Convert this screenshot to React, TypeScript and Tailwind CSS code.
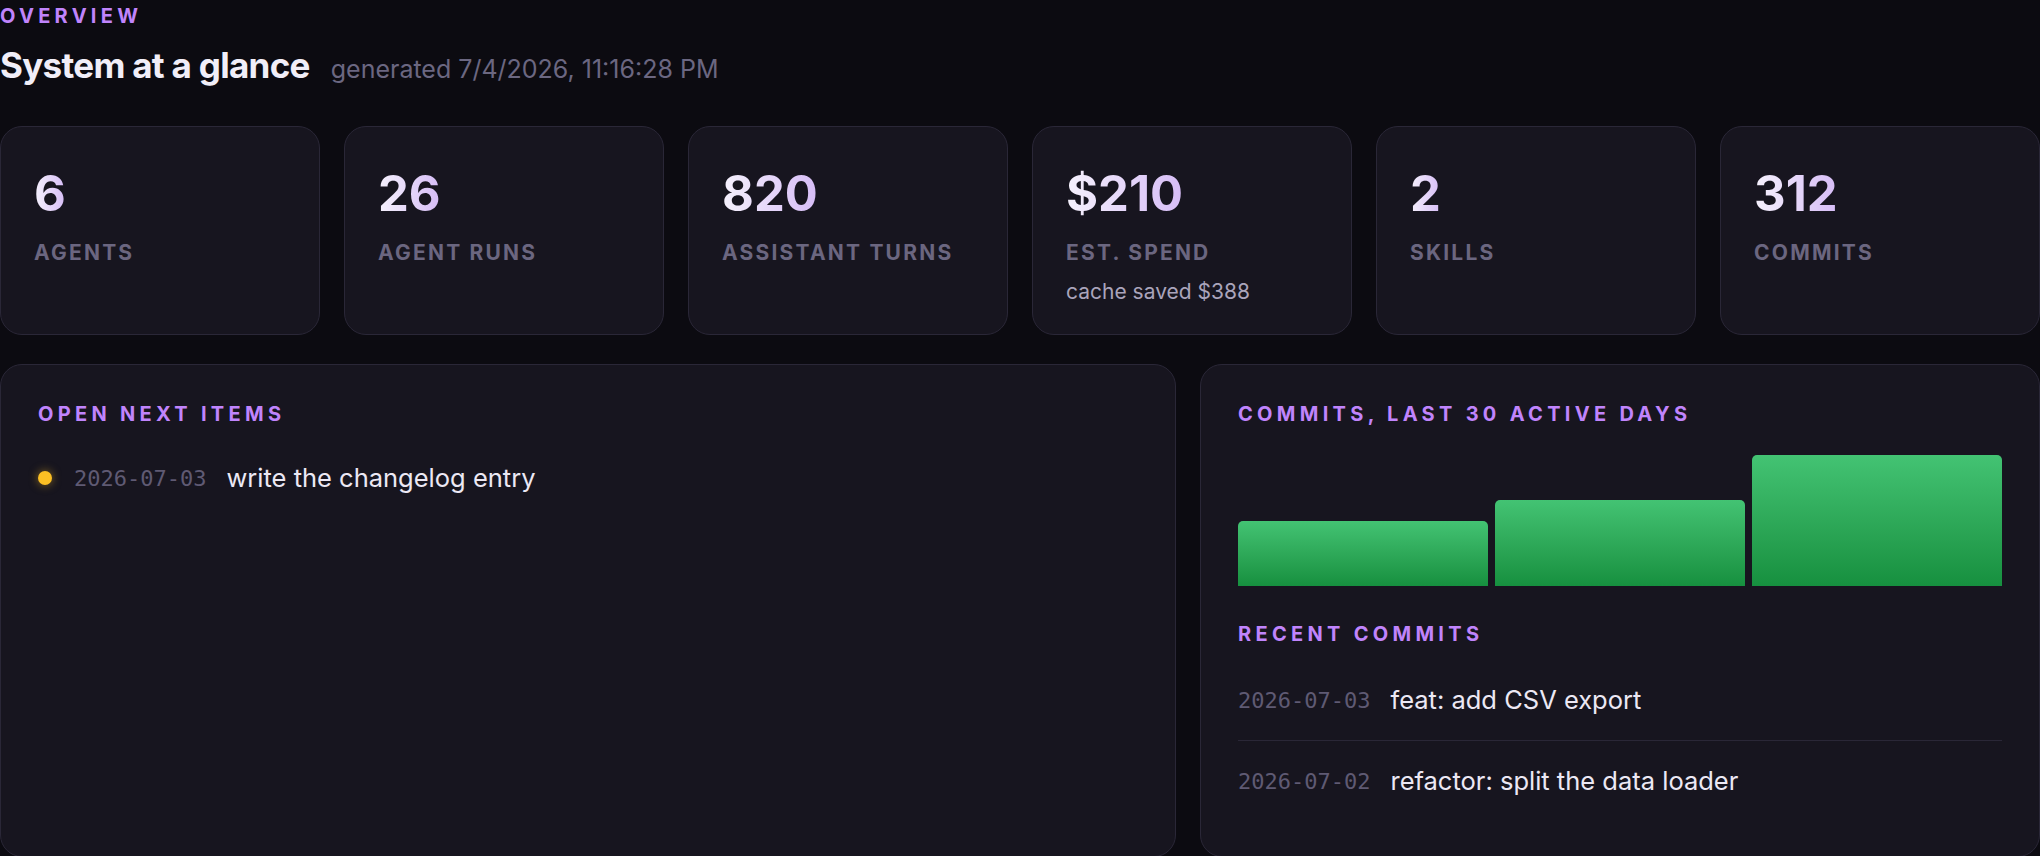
import React from "react";

const stats = [
  { value: "6", label: "Agents" },
  { value: "26", label: "Agent runs" },
  { value: "820", label: "Assistant turns" },
  { value: "$210", label: "Est. spend", sub: "cache saved $388" },
  { value: "2", label: "Skills" },
  { value: "312", label: "Commits" },
];

const nextItems = [{ date: "2026-07-03", text: "write the changelog entry" }];

const bars = [50, 66, 100];

const commits = [
  { date: "2026-07-03", msg: "feat: add CSV export" },
  { date: "2026-07-02", msg: "refactor: split the data loader" },
];

const sans = "font-['Inter','Liberation_Sans',sans-serif]";
const mono = "font-['DejaVu_Sans_Mono','Liberation_Mono',monospace]";

function Eyebrow({ children }: { children: React.ReactNode }) {
  return (
    <div className="text-[20px] leading-[28px] font-bold uppercase tracking-[0.215em] text-[#c084fc]">
      {children}
    </div>
  );
}

export default function App() {
  return (
    <div className={`${sans} min-h-screen h-[856px] overflow-hidden bg-[#0c0b11] text-[#ece8f4] pt-[2px]`}>
      <Eyebrow>Overview</Eyebrow>
      <div className="mt-[15px] flex h-[40px] items-baseline gap-[21px]">
        <h1 className="text-[35px] leading-[40px] font-bold tracking-[-0.02em] text-[#f1eef8]">
          System at a glance
        </h1>
        <span className="text-[25px] leading-[40px] text-[#6b6781]">generated 7/4/2026, 11:16:28 PM</span>
      </div>

      {/* stat cards */}
      <div className="mt-[41px] grid grid-cols-6 gap-6">
        {stats.map((s) => (
          <div
            key={s.label}
            className="h-[209px] rounded-[22px] border border-[#2a2737] bg-[#17151f] px-[33px] pt-[42px]"
          >
            <div className="text-[49px] leading-none font-bold">
              <span className="inline-block bg-gradient-to-r from-[#f5f1fc] to-[#d6bcf6] bg-clip-text text-transparent">
                {s.value}
              </span>
            </div>
            <div className="mt-[21px] text-[21px] leading-[28px] font-bold uppercase tracking-[0.105em] text-[#6b6680]">
              {s.label}
            </div>
            {s.sub && <div className="mt-[11px] text-[21px] leading-[28px] text-[#aaa4bb]">{s.sub}</div>}
          </div>
        ))}
      </div>

      {/* panels */}
      <div className="mt-[29px] grid grid-cols-[7fr_5fr] gap-6">
        <div className="h-[493px] rounded-[22px] border border-[#2a2737] bg-[#17151f] px-[37px] pt-[35px]">
          <Eyebrow>Open next items</Eyebrow>
          <ul className="mt-[34px]">
            {nextItems.map((it) => (
              <li key={it.date} className="flex h-[32px] items-center">
                <span className="h-[14px] w-[14px] rounded-full bg-[#fbbf24] shadow-[0_0_10px_rgba(251,191,36,0.5)]" />
                <span className={`${mono} ml-[22px] text-[22px] text-[#5f5a73]`}>{it.date}</span>
                <span className="ml-[20px] text-[25.5px] text-[#ece8f4]">{it.text}</span>
              </li>
            ))}
          </ul>
        </div>

        <div className="h-[493px] rounded-[22px] border border-[#2a2737] bg-[#17151f] px-[37px] pt-[35px]">
          <Eyebrow>Commits, last 30 active days</Eyebrow>
          <div className="mt-[27px] flex h-[131px] items-end gap-[7px]">
            {bars.map((h, i) => (
              <div
                key={i}
                className="flex-1 rounded-t-[5px] bg-gradient-to-b from-[#43c373] to-[#16903f]"
                style={{ height: `${h}%` }}
              />
            ))}
          </div>
          <div className="mt-[34px]">
            <Eyebrow>Recent commits</Eyebrow>
          </div>
          <ul className="mt-[13px]">
            {commits.map((c, i) => (
              <li
                key={c.date}
                className={`flex h-[80px] items-center ${i === 0 ? "border-b border-[#2a2737]" : ""}`}
              >
                <span className={`${mono} text-[22px] text-[#5f5a73]`}>{c.date}</span>
                <span className="ml-[20px] text-[25.5px] text-[#ece8f4]">{c.msg}</span>
              </li>
            ))}
          </ul>
        </div>
      </div>
    </div>
  );
}
